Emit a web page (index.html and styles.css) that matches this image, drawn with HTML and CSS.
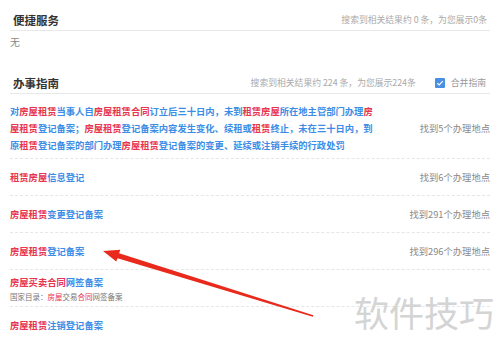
FILE: index.html
```html
<!DOCTYPE html>
<html lang="zh-CN">
<head>
  <meta charset="UTF-8" />
  <meta name="viewport" content="width=device-width, initial-scale=1.0"/>
  <title>办事指南</title>
  <link rel="stylesheet" href="styles.css">
</head>
<body>
  <div class="page">
    <section class="block">
      <div class="block-head">
        <h2>便捷服务</h2>
        <span class="meta">搜索到相关结果约 0 条，为您展示0条</span>
      </div>
      <p class="empty">无</p>
    </section>

    <section class="block guide">
      <div class="block-head">
        <h2>办事指南</h2>
        <div class="head-right">
          <span class="meta">搜索到相关结果约 224 条，为您展示224条</span>
          <label class="merge">
            <span class="check">
              <svg viewBox="0 0 10 10" width="10" height="10"><path d="M2.3 5.2 L4.2 7 L7.8 3.2" fill="none" stroke="#fff" stroke-width="1.2"/></svg>
            </span>合并指南
          </label>
        </div>
      </div>

      <ul class="guide-list">
        <li class="guide-item first">
          <span class="title">对<em>房屋租赁</em>当事人自<em>房屋租赁合同</em>订立后三十日内，未到<em>租赁房屋</em>所在地主管部门办理<em>房屋租赁</em>登记备案；<em>房屋租赁</em>登记备案内容发生变化、续租或<em>租赁</em>终止，未在三十日内，到原<em>租赁</em>登记备案的部门办理<em>房屋租赁</em>登记备案的变更、延续或注销手续的行政处罚</span>
          <span class="count">找到5个办理地点</span>
        </li>
        <li class="guide-item">
          <span class="title"><em>租赁房屋</em>信息登记</span>
          <span class="count">找到6个办理地点</span>
        </li>
        <li class="guide-item">
          <span class="title"><em>房屋租赁</em>变更登记备案</span>
          <span class="count">找到291个办理地点</span>
        </li>
        <li class="guide-item">
          <span class="title"><em>房屋租赁</em>登记备案</span>
          <span class="count">找到296个办理地点</span>
        </li>
        <li class="guide-item with-sub">
          <div>
            <span class="title"><em>房屋买卖合同</em>网签备案</span>
            <span class="sub">国家目录：<em>房屋</em>交易<em>合同</em>网签备案</span>
          </div>
        </li>
        <li class="guide-item">
          <span class="title"><em>房屋租赁</em>注销登记备案</span>
        </li>
      </ul>
    </section>

    <svg class="arrow" viewBox="0 0 500 349" width="500" height="349">
      <path d="M103 251 L120.3 249.8 L119.1 253.2 L313.3 315.2 L312.8 316.8 L117.5 258.2 L116.3 261.6 Z" fill="#e8291c"/>
    </svg>
    <div class="watermark">软件技巧</div>
  </div>
</body>
</html>
```

FILE: styles.css
```css
body {
  margin: 0;
  background: #fff;
  font-family: "Noto Sans CJK SC", sans-serif;
  color: #333;
}
.page {
  position: relative;
  height: 349px;
  padding: 0 10px;
  overflow: hidden;
}
.block-head {
  display: flex;
  justify-content: space-between;
  align-items: center;
  padding: 12px 3px 2px;
  line-height: 16px;
  border-bottom: 1px solid #e8e8e8;
}
.guide .block-head {
  padding-top: 26px;
}
.block-head h2 {
  margin: 0;
  font-size: 11.5px;
  font-weight: bold;
  color: #333;
}
.meta {
  font-size: 8.8px;
  color: #aaa;
}
.head-right {
  display: flex;
  align-items: center;
  gap: 19px;
}
.merge {
  display: flex;
  align-items: center;
  gap: 6px;
  font-size: 8.8px;
  color: #999;
  padding-right: 1px;
}
.check {
  display: flex;
  width: 10px;
  height: 10px;
  background: #4a90e2;
  border-radius: 1px;
}
.empty {
  margin: 0;
  padding-top: 4px;
  line-height: 14px;
  font-size: 10px;
  color: #888;
}
.guide-list {
  list-style: none;
  margin: 0;
  padding: 0;
}
.guide-item {
  display: flex;
  justify-content: space-between;
  align-items: center;
  padding: 10px 0 9px;
  line-height: 17px;
  border-top: 1px dashed #e6e6e6;
}
.guide-item.first {
  border-top: none;
  padding: 9px 0 4px;
}
.guide-item.with-sub {
  padding: 4px 0 3px;
}
.title {
  display: block;
  font-size: 9.3px;
  font-weight: bold;
  color: #3b8de6;
}
.first .title {
  width: 366px;
}
.title em, .sub em {
  font-style: normal;
  color: #e8344e;
}
.sub {
  display: block;
  font-size: 7.5px;
  line-height: 12px;
  color: #777;
}
.count {
  font-size: 9.3px;
  color: #888;
  white-space: nowrap;
}
.arrow {
  position: absolute;
  left: 0;
  top: 0;
  pointer-events: none;
}
.watermark {
  position: absolute;
  left: 354px;
  top: 291px;
  font-size: 35px;
  line-height: 42px;
  color: #d4d4d4;
  pointer-events: none;
}
```
